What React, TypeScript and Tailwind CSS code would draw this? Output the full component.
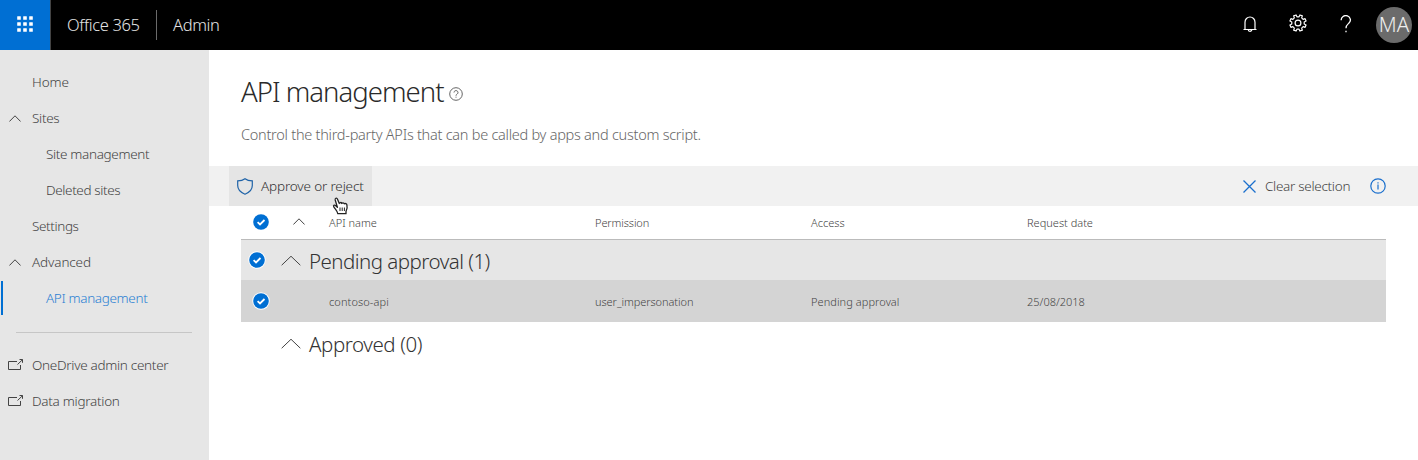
import React from 'react';

type IconProps = { className?: string };

const Chevron = ({ className = '' }: IconProps) => (
  <svg className={className} viewBox="0 0 12 7" fill="none" stroke="currentColor" preserveAspectRatio="none">
    <path d="M0.4 6.5 6 0.8 11.6 6.5" vectorEffect="non-scaling-stroke" />
  </svg>
);

const OpenExternal = ({ className = '' }: IconProps) => (
  <svg className={className} width="16" height="12" viewBox="0 0 16 12" fill="none" stroke="currentColor">
    <path d="M9 2.5H.5v8h12V6" />
    <path d="M9.5 5.5 14.5.7M11.5.5H14.5V3.8" />
  </svg>
);

const Check = ({ className = '' }: IconProps) => (
  <svg className={className} width="18" height="18" viewBox="0 0 18 18" fill="none">
    <circle cx="9" cy="9" r="8.7" fill="#fff" />
    <circle cx="9" cy="9" r="7.8" fill="#006fd3" />
    <path d="M5.6 9.2 8 11.5 12.5 7" stroke="#fff" strokeWidth="1.8" />
  </svg>
);

const Waffle = () => (
  <svg width="16" height="16" viewBox="0 0 16 16" fill="#fff">
    {[0, 6, 12].flatMap((y) => [0, 6, 12].map((x) => <rect key={`${x}-${y}`} x={x + 0.2} y={y + 0.2} width="3.6" height="3.6" rx="0.4" />))}
  </svg>
);

const Bell = () => (
  <svg width="14" height="17" viewBox="0 0 14 17" fill="none" stroke="#fff" strokeWidth="1.2">
    <path d="M.5 13.5H13.5M2 13.5V6.2A5 5.2 0 0 1 12 6.2V13.5M5.2 13.5A1.8 1.8 0 0 0 8.8 13.5" />
  </svg>
);

const gearPoints = Array.from({ length: 8 }, (_, i) =>
  [[-13, 6.3], [-9, 8.3], [9, 8.3], [13, 6.3]].map(([offset, radius]) => {
    const angle = ((i * 45 + 22.5 + offset) * Math.PI) / 180;
    return `${(9 + radius * Math.cos(angle)).toFixed(2)},${(9 + radius * Math.sin(angle)).toFixed(2)}`;
  }).join(' ')
).join(' ');

const Gear = () => (
  <svg width="18" height="18" viewBox="0 0 18 18" fill="none" stroke="#fff" strokeWidth="1.2" strokeLinejoin="round">
    <polygon points={gearPoints} />
    <circle cx="9" cy="9" r="2.9" />
  </svg>
);

const Question = () => (
  <svg width="12" height="18" viewBox="0 0 12 18" fill="none" stroke="#fff" strokeWidth="1.3">
    <path d="M1.2 5.2A4.6 4.3 0 1 1 9 8C7.2 9.6 6 10.4 6 13.2" />
    <path d="M6 15.8V17.2" />
  </svg>
);

const HelpCircle = () => (
  <svg width="14" height="14" viewBox="0 0 14 14" fill="none" stroke="#555">
    <circle cx="7" cy="7" r="6.3" strokeWidth="0.9" />
    <path d="M5 5.5A2 1.9 0 1 1 8.2 7C7.4 7.6 7 7.9 7 8.7M7 9.7V10.7" strokeWidth="0.9" />
  </svg>
);

const Shield = () => (
  <svg width="16" height="17" viewBox="0 0 16 17" fill="none" stroke="#1f63a8" strokeWidth="1.2">
    <path d="M8 .8C6.2 2.2 3.6 2.9 .7 2.9V7.5C.7 11.5 3.7 14.5 8 16.2 12.3 14.5 15.3 11.5 15.3 7.5V2.9C12.4 2.9 9.8 2.2 8 .8Z" />
  </svg>
);

const Cross = () => (
  <svg width="13" height="13" viewBox="0 0 13 13" fill="none" stroke="#1a6fcd" strokeWidth="1.3">
    <path d="M.5.5 12.5 12.5M12.5.5.5 12.5" />
  </svg>
);

const Info = () => (
  <svg width="16" height="16" viewBox="0 0 16 16" fill="none" stroke="#1a6fcd" strokeWidth="1.2">
    <circle cx="8" cy="8" r="7.2" />
    <path d="M8 6.5V11.5M8 4.2V5.4" />
  </svg>
);

const HandCursor = () => (
  <svg width="17" height="18" viewBox="0 0 17 18" fill="#fff" stroke="#222" strokeWidth="1.3" strokeLinejoin="round">
    <path d="M5.8 16.7C5.5 14 3.5 12.5 1.8 9.8 1 8.5 2.3 7.5 3.5 8.5L5.4 10.3 3.2 3C2.8 1.2 4.7.4 5.4 2L7.3 6.5C7.5 5.3 9.4 5.1 9.8 6.5 10.3 5.5 11.9 5.5 12.3 6.9 13 6.2 14.6 6.4 14.9 7.8 15.5 10 15.3 12 14 14.5V16.7Z" />
    <path d="M8 10.5V14M10.2 10.5V14M12.4 10.5V14" strokeWidth="1" />
  </svg>
);

const NavItem = ({ label, track, sub, expand, external, active }: {
  label: string; track: string; sub?: boolean; expand?: boolean; external?: boolean; active?: boolean;
}) => (
  <div className={`relative flex h-9 items-center ${active ? 'text-[#2b80d3]' : 'text-[#444]'}`}>
    {active && <span className="absolute left-px top-px h-[34px] w-0.5 bg-[#006fd3]" />}
    <span className={`flex shrink-0 items-center pl-2 ${sub ? 'w-[46px]' : 'w-8'}`}>
      {expand && <Chevron className="ml-px mt-px h-[7px] w-3" />}
      {external && <OpenExternal />}
    </span>
    <span className={`whitespace-nowrap text-[13.5px] ${track}`}>{label}</span>
  </div>
);

const columns = 'grid grid-cols-[40px_48px_266px_216px_216px_1fr] items-center';

export default function App() {
  return (
    <div className="flex h-[460px] w-[1418px] flex-col overflow-hidden bg-white font-['Noto_Sans',sans-serif] font-light text-[#444]">
      <header className="flex h-[50px] shrink-0 items-center bg-black text-[#e4e4e4]">
        <div className="flex h-[50px] w-[51px] items-center border-r border-[#444] bg-[#006fd3] pb-0.5 pl-[17px]"><Waffle /></div>
        <span className="ml-4 w-[89px] text-[16.5px] tracking-[-0.36px]">Office 365</span>
        <span className="h-[30px] w-px bg-[#6a6a6a]" />
        <span className="ml-4 text-[16.5px] tracking-[-0.35px]">Admin</span>
        <div className="ml-auto flex items-center pr-[6px]">
          <span className="mr-[32px] -mt-0.5"><Bell /></span>
          <span className="mr-[33px] -mt-1"><Gear /></span>
          <span className="mr-[24px] -mt-0.5"><Question /></span>
          <span className="flex size-9 items-center justify-center rounded-full bg-[#6b6b6b] pb-px text-[20.5px] text-[#eee]">MA</span>
        </div>
      </header>
      <div className="flex min-h-0 flex-1">
        <nav className="w-[209px] shrink-0 bg-[#e6e6e6] pt-[14px]">
          <NavItem label="Home" track="tracking-[-0.1px]" />
          <NavItem label="Sites" track="tracking-[-0.3px]" expand />
          <NavItem label="Site management" track="tracking-[-0.34px]" sub />
          <NavItem label="Deleted sites" track="tracking-[-0.38px]" sub />
          <NavItem label="Settings" track="tracking-[-0.38px]" />
          <NavItem label="Advanced" track="tracking-[-0.12px]" expand />
          <NavItem label="API management" track="tracking-[-0.34px]" sub active />
          <div className="mx-4 mb-[14px] mt-4 h-px w-44 bg-[#c6c6c6]" />
          <NavItem label="OneDrive admin center" track="tracking-[-0.3px]" external />
          <NavItem label="Data migration" track="tracking-[-0.28px]" external />
        </nav>
        <main className="min-w-0 flex-1">
          <div className="h-[116px] pl-8 pt-[22px]">
            <div className="flex h-10 items-center">
              <h1 className="text-[27.5px] leading-10 tracking-[-0.98px] text-[#2a2a2a]">API management</h1>
              <span className="ml-[5px] mt-[3px]"><HelpCircle /></span>
            </div>
            <p className="mt-[11px] text-[14.5px] leading-[22px] tracking-[-0.26px] text-[#666]">
              Control the third-party APIs that can be called by apps and custom script.
            </p>
          </div>
          <div className="flex h-10 items-center bg-[#f1f1f1] pl-5 text-[13.5px]">
            <button className="relative flex h-10 w-[143px] items-center bg-[#e5e5e5] pl-2 text-[#333]">
              <span><Shield /></span>
              <span className="ml-2 whitespace-nowrap tracking-[-0.16px]">Approve or reject</span>
              <span className="absolute left-[103px] top-[31px] z-10"><HandCursor /></span>
            </button>
            <div className="ml-auto flex items-center pr-8">
              <Cross />
              <span className="ml-[9px] w-[105px] whitespace-nowrap tracking-[-0.3px]">Clear selection</span>
              <span className="-mt-px"><Info /></span>
            </div>
          </div>
          <div className="mx-8 text-[11px]">
            <div className={`${columns} h-[34px] border-b border-[#bbb]`}>
              <Check className="-mt-0.5 ml-[11px]" />
              <Chevron className="-mt-0.5 ml-3 h-[7px] w-3" />
              <span className="pt-0.5">API name</span>
              <span className="pt-0.5 tracking-[-0.1px]">Permission</span>
              <span className="pt-0.5">Access</span>
              <span className="pt-0.5">Request date</span>
            </div>
            <div className="flex h-10 items-center bg-[#e6e6e6] pl-[7px]">
              <Check />
              <Chevron className="ml-[15px] h-[11px] w-5" />
              <h2 className="ml-2 mt-[3px] text-[20.5px] tracking-[-0.52px] text-[#333]">Pending approval (1)</h2>
            </div>
            <div className={`${columns} h-[42px] bg-[#d4d4d4]`}>
              <Check className="ml-[11px]" />
              <span />
              <span className="pt-0.5 tracking-[0.1px]">contoso-api</span>
              <span className="pt-0.5 tracking-[-0.06px]">user_impersonation</span>
              <span className="pt-0.5 tracking-[0.07px]">Pending approval</span>
              <span className="pt-0.5">25/08/2018</span>
            </div>
            <div className="flex h-[42px] items-center pl-10">
              <Chevron className="h-[11px] w-5" />
              <h2 className="ml-2 mt-[3px] text-[20.5px] tracking-[-0.42px] text-[#333]">Approved (0)</h2>
            </div>
          </div>
        </main>
      </div>
    </div>
  );
}
